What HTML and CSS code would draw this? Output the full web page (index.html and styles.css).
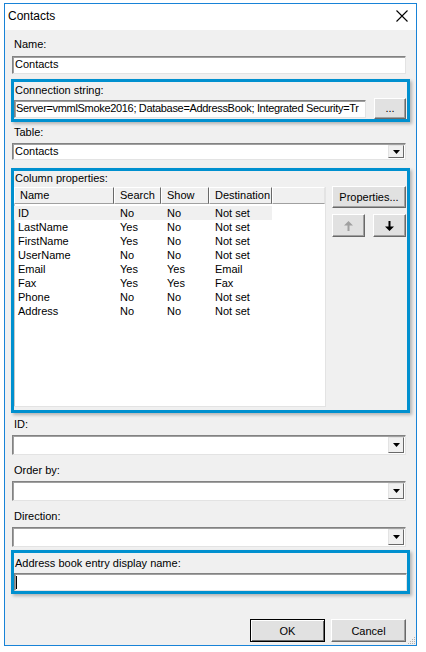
FILE: index.html
```html
<!DOCTYPE html>
<html>
<head>
<meta charset="utf-8">
<link rel="stylesheet" href="styles.css">
</head>
<body>
<div class="window">
  <div class="titlebar">
    <span class="title">Contacts</span>
    <svg class="close" width="12" height="12" viewBox="0 0 12 12"><path d="M0.5 0.5 L11.5 11.5 M11.5 0.5 L0.5 11.5" stroke="#000" stroke-width="1.1" fill="none"/></svg>
  </div>
  <div class="client">
    <div class="label lbl-name">Name:</div>
    <div class="edit edit-name">Contacts</div>

    <div class="hl hl-conn">
      <div class="label hl-label">Connection string:</div>
      <div class="conn-row">
        <div class="edit edit-conn">Server=vmmlSmoke2016; Database=AddressBook; Integrated Security=Tr</div>
        <div class="btn btn-dots">...</div>
      </div>
    </div>

    <div class="label lbl-table">Table:</div>
    <div class="combo combo-table"><span class="combo-text">Contacts</span><span class="drop"><svg width="7" height="4" viewBox="0 0 7 4"><path d="M0 0H7L3.5 4Z" fill="#000"/></svg></span></div>

    <div class="hl hl-cols">
      <div class="label hl-label">Column properties:</div>
      <div class="cols-row">
        <div class="listview">
          <div class="lv-header">
            <div class="hc c1">Name</div>
            <div class="hc c2">Search</div>
            <div class="hc c3">Show</div>
            <div class="hc c4">Destination</div>
            <div class="hc c5"></div>
          </div>
          <div class="lv-row sel"><span class="c1">ID</span><span class="c2">No</span><span class="c3">No</span><span class="c4">Not set</span></div>
          <div class="lv-row"><span class="c1">LastName</span><span class="c2">Yes</span><span class="c3">No</span><span class="c4">Not set</span></div>
          <div class="lv-row"><span class="c1">FirstName</span><span class="c2">Yes</span><span class="c3">No</span><span class="c4">Not set</span></div>
          <div class="lv-row"><span class="c1">UserName</span><span class="c2">No</span><span class="c3">No</span><span class="c4">Not set</span></div>
          <div class="lv-row"><span class="c1">Email</span><span class="c2">Yes</span><span class="c3">Yes</span><span class="c4">Email</span></div>
          <div class="lv-row"><span class="c1">Fax</span><span class="c2">Yes</span><span class="c3">Yes</span><span class="c4">Fax</span></div>
          <div class="lv-row"><span class="c1">Phone</span><span class="c2">No</span><span class="c3">No</span><span class="c4">Not set</span></div>
          <div class="lv-row"><span class="c1">Address</span><span class="c2">No</span><span class="c3">No</span><span class="c4">Not set</span></div>
        </div>
        <div class="side">
          <div class="btn btn-props">Properties...</div>
          <div class="arrows">
            <div class="btn btn-arrow"><svg width="9" height="10" viewBox="0 0 9 10"><path d="M4.5 0 L9 4.5 H5.5 V10 H3.5 V4.5 H0 Z" fill="#a0a0a0"/></svg></div>
            <div class="btn btn-arrow"><svg width="9" height="10" viewBox="0 0 9 10"><path d="M4.5 10 L9 5.5 H5.5 V0 H3.5 V5.5 H0 Z" fill="#000"/></svg></div>
          </div>
        </div>
      </div>
    </div>

    <div class="label lbl-id">ID:</div>
    <div class="combo combo-big"><span class="combo-text"></span><span class="drop"><svg width="7" height="4" viewBox="0 0 7 4"><path d="M0 0H7L3.5 4Z" fill="#000"/></svg></span></div>

    <div class="label lbl-next">Order by:</div>
    <div class="combo combo-big"><span class="combo-text"></span><span class="drop"><svg width="7" height="4" viewBox="0 0 7 4"><path d="M0 0H7L3.5 4Z" fill="#000"/></svg></span></div>

    <div class="label lbl-next">Direction:</div>
    <div class="combo combo-big"><span class="combo-text"></span><span class="drop"><svg width="7" height="4" viewBox="0 0 7 4"><path d="M0 0H7L3.5 4Z" fill="#000"/></svg></span></div>

    <div class="hl hl-addr">
      <div class="label hl-label">Address book entry display name:</div>
      <div class="edit edit-addr"><span class="caret"></span></div>
    </div>

    <div class="footer">
      <div class="btn btn-ok">OK</div>
      <div class="btn btn-cancel">Cancel</div>
    </div>
    <svg class="grip" width="10" height="10" viewBox="0 0 10 10">
      <rect x="8" y="2" width="1" height="1" fill="#b0b0b0"/>
      <rect x="6" y="4" width="1" height="1" fill="#b0b0b0"/>
      <rect x="8" y="4" width="1" height="1" fill="#b0b0b0"/>
      <rect x="4" y="6" width="1" height="1" fill="#b0b0b0"/>
      <rect x="6" y="6" width="1" height="1" fill="#b0b0b0"/>
      <rect x="8" y="6" width="1" height="1" fill="#b0b0b0"/>
      <rect x="2" y="8" width="1" height="1" fill="#b0b0b0"/>
      <rect x="4" y="8" width="1" height="1" fill="#b0b0b0"/>
      <rect x="6" y="8" width="1" height="1" fill="#b0b0b0"/>
      <rect x="8" y="8" width="1" height="1" fill="#b0b0b0"/>
    </svg>
  </div>
</div>
</body>
</html>
```
FILE: styles.css
```css
html, body {
  margin: 0;
  padding: 0;
  background: #ffffff;
}
body {
  font-family: "Liberation Sans", Arial, sans-serif;
  font-size: 11px;
  color: #000;
}
.window {
  margin: 3px 0 0 4px;
  width: 411px;
  height: 641px;
  border: 1px solid #1883d7;
  display: flex;
  flex-direction: column;
  background: #f0f0f0;
}
.titlebar {
  height: 26px;
  background: #ffffff;
  display: flex;
  align-items: center;
  justify-content: space-between;
  padding: 0 8px 0 3px;
  flex: none;
}
.title {
  font-size: 12px;
  margin-top: -2px;
}
.close {
  margin-top: -2px;
}
.client {
  flex: 1;
  position: relative;
  display: flex;
  flex-direction: column;
  padding: 0 10px 0 7px;
}
.label {
  height: 13px;
  line-height: 13px;
  padding-left: 2px;
  white-space: nowrap;
}
.lbl-name { margin-top: 8px; }
.edit {
  box-sizing: border-box;
  background: #fff;
  border: 1px solid;
  border-color: #828282 #e3e3e3 #e3e3e3 #828282;
  box-shadow: inset 1px 1px 0 #a0a0a0;
  padding: 0 2px;
  line-height: 15px;
  white-space: nowrap;
  overflow: hidden;
}
.edit-name {
  margin-top: 5px;
  height: 18px;
}
.hl {
  box-sizing: border-box;
  border: 3px solid #0090cf;
  margin-left: -1px;
  margin-right: -4px;
  box-shadow: 2px 2px 3px rgba(0, 0, 0, 0.25);
  display: flex;
  flex-direction: column;
}
.hl-label {
  padding-left: 1px;
}
.hl-conn {
  margin-top: 5px;
  height: 43px;
}
.hl-conn .hl-label { margin-top: 2px; }
.conn-row {
  display: flex;
  align-items: center;
  gap: 8px;
  margin-top: 1px;
  padding-right: 1px;
}
.edit-conn {
  width: 352px;
  height: 18px;
  flex: none;
  letter-spacing: -0.32px;
  padding-left: 1px;
}
.btn {
  box-sizing: border-box;
  background: #e1e1e1;
  border: 1px solid;
  border-color: #fff #696969 #696969 #fff;
  box-shadow: inset -1px -1px 0 #a0a0a0;
  display: flex;
  align-items: center;
  justify-content: center;
  white-space: nowrap;
}
.btn-dots {
  width: 32px;
  height: 21px;
  padding-bottom: 2px;
}
.lbl-table { margin-top: 4px; }
.combo {
  box-sizing: border-box;
  background: #fff;
  border: 1px solid;
  border-color: #828282 #e3e3e3 #e3e3e3 #828282;
  box-shadow: inset 1px 1px 0 #a0a0a0;
  display: flex;
  align-items: stretch;
  padding: 1px 1px 1px 2px;
}
.combo-text {
  flex: 1;
  line-height: 13px;
}
.drop {
  width: 16px;
  flex: none;
  box-sizing: border-box;
  background: #f0f0f0;
  border: 1px solid;
  border-color: #e3e3e3 #696969 #696969 #e3e3e3;
  display: flex;
  align-items: center;
  justify-content: center;
}
.combo-table {
  margin-top: 4px;
  height: 17px;
}
.combo-big {
  margin-top: 4px;
  height: 20px;
}
.hl-cols {
  margin-top: 8px;
  height: 245px;
}
.hl-cols .hl-label { margin-top: 1px; }
.cols-row {
  flex: 1;
  display: flex;
  gap: 6px;
  margin-top: 2px;
}
.listview {
  box-sizing: border-box;
  width: 312px;
  height: 220px;
  background: #fff;
  border-right: 1px solid #e3e3e3;
  border-bottom: 1px solid #e3e3e3;
  box-shadow: inset 1px 0 0 #c8c8c8;
}
.lv-header {
  display: flex;
  height: 17px;
}
.hc {
  box-sizing: border-box;
  background: #f0f0f0;
  border: 1px solid;
  border-color: #fff #696969 #a0a0a0 #fff;
  padding-left: 5px;
  line-height: 14px;
}
.lv-header .c1 { width: 100px; }
.lv-header .c2 { width: 47px; }
.lv-header .c3 { width: 48px; }
.lv-header .c4 { width: 63px; }
.lv-header .c5 { flex: 1; border-right-color: #e3e3e3; }
.lv-row {
  display: flex;
  height: 14px;
  line-height: 14px;
  width: 258px;
}
.lv-row.sel {
  background: #f0f0f0;
  margin-top: 2px;
}
.lv-row span { padding-left: 4px; box-sizing: border-box; }
.lv-row .c1 { width: 100px; }
.lv-row .c2 { width: 47px; padding-left: 6px; }
.lv-row .c3 { width: 48px; padding-left: 6px; }
.lv-row .c4 { width: 63px; padding-left: 6px; }
.side {
  display: flex;
  flex-direction: column;
  gap: 6px;
  width: 74px;
  margin-top: -1px;
}
.btn-props {
  height: 22px;
}
.arrows {
  display: flex;
  justify-content: space-between;
}
.btn-arrow {
  width: 33px;
  height: 23px;
}
.lbl-id { margin-top: 5px; }
.lbl-next { margin-top: 9px; }
.hl-addr {
  margin-top: 3px;
  height: 44px;
}
.hl-addr .hl-label { margin-top: 4px; }
.edit-addr {
  margin-top: 3px;
  height: 19px;
  position: relative;
}
.caret {
  position: absolute;
  left: 1px;
  top: 2px;
  width: 1px;
  height: 13px;
  background: #000;
}
.footer {
  margin-top: 25px;
  display: flex;
  justify-content: flex-end;
  gap: 6px;
}
.btn-ok {
  width: 75px;
  height: 23px;
  border: 1px solid #000;
  box-shadow: inset 1px 1px 0 #fff, inset -1px -1px 0 #696969;
}
.btn-cancel {
  width: 75px;
  height: 23px;
}
.grip {
  position: absolute;
  right: 0;
  bottom: 0;
}
```
